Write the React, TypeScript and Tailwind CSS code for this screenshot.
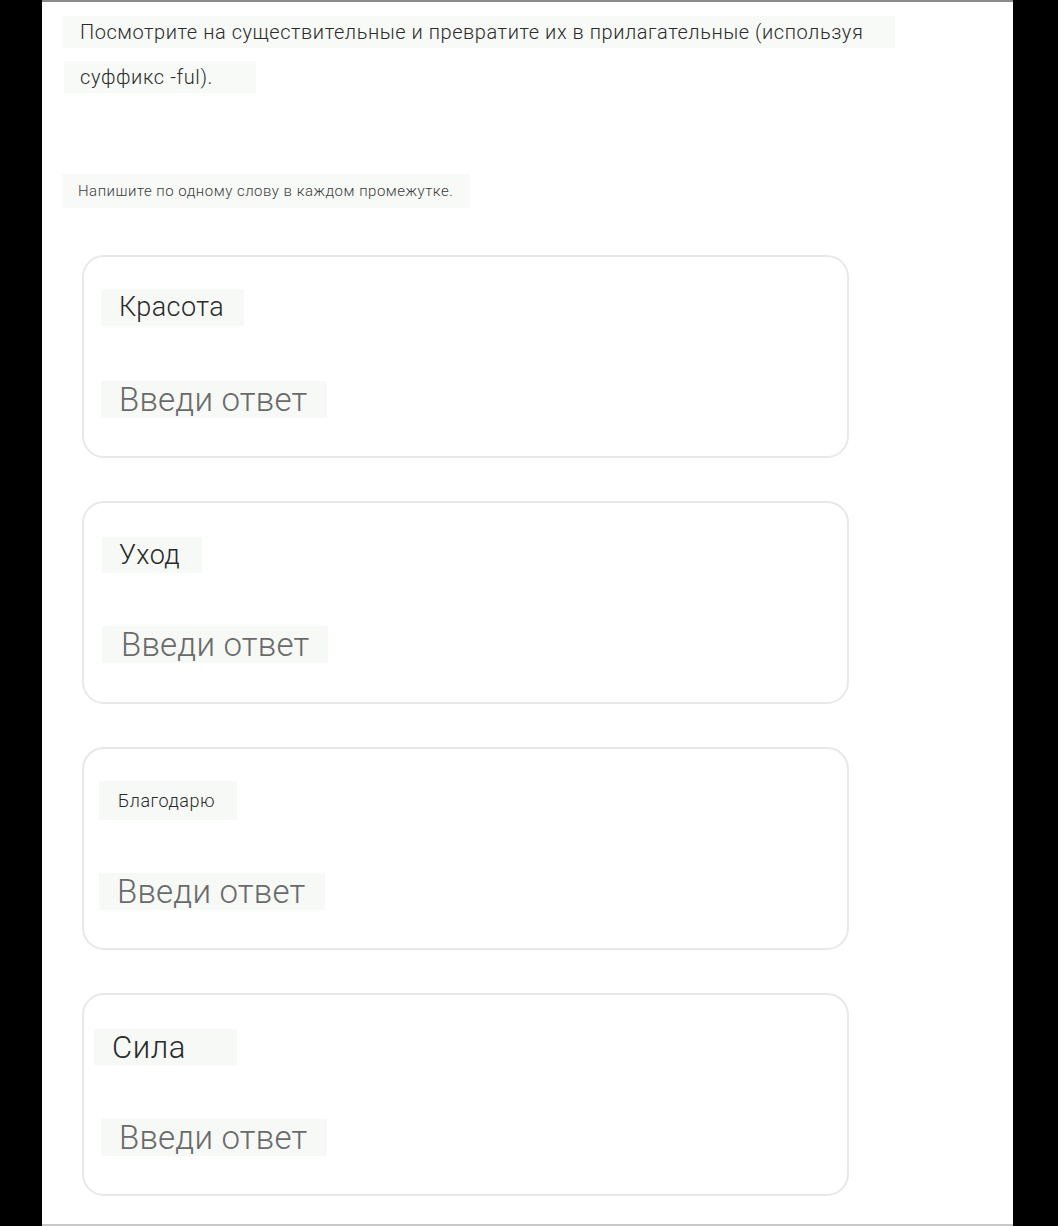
import React from 'react';

type Item = {
  word: string;
  wordClass: string;
  labelClass: string;
  inputClass: string;
};

const ITEMS: Item[] = [
  {
    word: 'Красота',
    wordClass: 'text-[27px] tracking-[0.4px]',
    labelClass: 'ml-[17px] mt-[32px] h-[37px] w-[143px] pl-[18px]',
    inputClass: 'ml-[17px] mt-[55px] pl-[18px]',
  },
  {
    word: 'Уход',
    wordClass: 'text-[27px] tracking-[0.4px]',
    labelClass: 'ml-[18px] mt-[34px] h-[36px] w-[100px] pl-[17px]',
    inputClass: 'ml-[18px] mt-[53px] pl-[19px]',
  },
  {
    word: 'Благодарю',
    wordClass: 'text-[18px] tracking-[0.5px]',
    labelClass: 'ml-[15px] mt-[32px] h-[39px] w-[138px] pl-[19px]',
    inputClass: 'ml-[15px] mt-[53px] pl-[18px]',
  },
  {
    word: 'Сила',
    wordClass: 'text-[31px] tracking-[0.6px]',
    labelClass: 'ml-[10px] mt-[34px] h-[36px] w-[143px] pl-[18px]',
    inputClass: 'ml-[17px] mt-[54px] pl-[18px]',
  },
];

const WordCard = ({ item }: { item: Item }) => (
  <div className="h-[203px] w-[767px] rounded-[22px] border-2 border-[#e8e8e8] bg-white">
    <div className={`flex items-center bg-[#f6f9f6] ${item.labelClass}`}>
      <span className={`${item.wordClass} font-light leading-none text-[#2a2a2a]`}>{item.word}</span>
    </div>
    <div className={`flex h-[37px] w-[226px] items-center bg-[#f6f9f6] ${item.inputClass}`}>
      <span className="text-[33px] font-light leading-none tracking-[0.2px] text-[#6a6a6a]">Введи ответ</span>
    </div>
  </div>
);

export default function App() {
  return (
    <div className="flex min-h-screen bg-black pl-[42px] font-['Roboto','Liberation_Sans',sans-serif]">
      <div className="h-[1226px] w-[971px] border-t-2 border-b-2 border-t-[#8a8a8a] border-b-[#c8c8c8] bg-white">
        {/* task heading */}
        <div className="ml-[20px] mt-[14px] flex h-[32px] w-[833px] items-center bg-[#f7faf7] pl-[18px]">
          <span className="text-[20px] font-light leading-none tracking-[0.55px] text-[#2c2c2c]">
            Посмотрите на существительные и превратите их в прилагательные (используя
          </span>
        </div>
        <div className="ml-[22px] mt-[13px] flex h-[32px] w-[192px] items-center bg-[#f7faf7] pl-[16px]">
          <span className="text-[20px] font-light leading-none tracking-[0.6px] text-[#2c2c2c]">суффикс -ful).</span>
        </div>

        <div className="ml-[20px] mt-[81px] flex h-[34px] w-[408px] items-center bg-[#f7faf7] pl-[16px]">
          <span className="text-[15px] font-light leading-none tracking-[0.5px] text-[#3c3c3c]">
            Напишите по одному слову в каждом промежутке.
          </span>
        </div>

        <div className="ml-[40px] mt-[47px] flex flex-col gap-[43px]">
          {ITEMS.map((item) => (
            <WordCard key={item.word} item={item} />
          ))}
        </div>
      </div>
    </div>
  );
}
